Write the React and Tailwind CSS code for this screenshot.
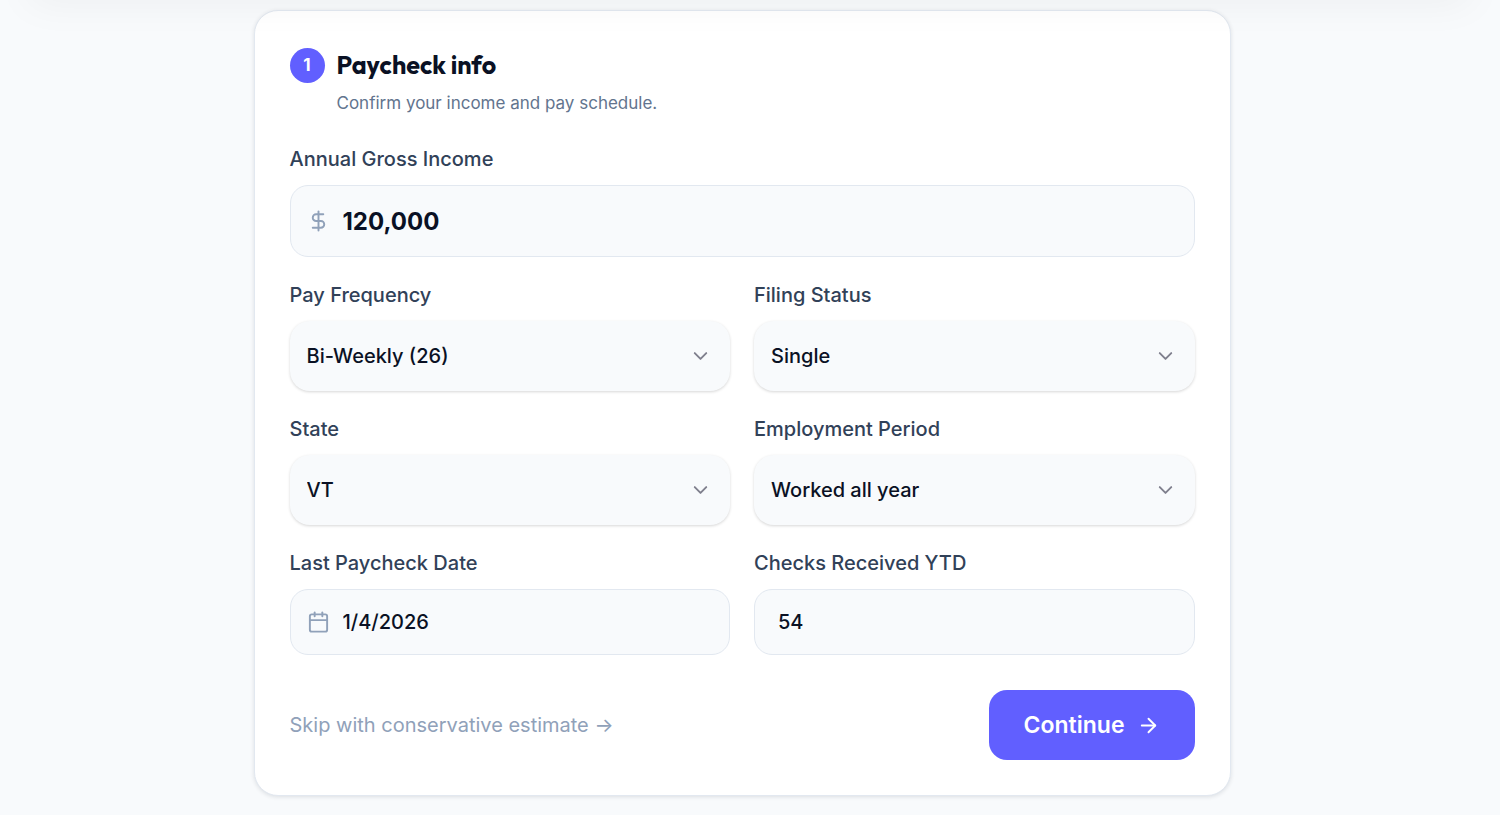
import { useState } from 'react'
import { ArrowRight, Calendar, ChevronDown, DollarSign } from 'lucide-react'

const labelClass = 'block text-[20px] leading-7 font-medium text-slate-700 mb-3'
const inputClass =
    'block w-full rounded-[18px] border border-slate-200 bg-slate-50 text-[#0a1124] outline-none focus:border-indigo-500'

function SelectField({ id, label, options }) {
    return (
        <div>
            <label htmlFor={id} className={labelClass}>{label}</label>
            <div className="relative">
                <select
                    id={id}
                    className="block w-full h-[70px] appearance-none rounded-[20px] bg-slate-50 pl-[17px] pr-14 text-[20px] font-medium text-[#0a1124] shadow-[0_1px_3px_rgba(0,0,0,0.16)] outline-none"
                >
                    {options.map((option) => (
                        <option key={option}>{option}</option>
                    ))}
                </select>
                <ChevronDown
                    size={23}
                    strokeWidth={2}
                    className="pointer-events-none absolute right-[18px] top-1/2 -translate-y-1/2 text-[#7f7f8d]"
                />
            </div>
        </div>
    )
}

export default function App() {
    const [income, setIncome] = useState('120,000')
    const [date, setDate] = useState('1/4/2026')
    const [checks, setChecks] = useState('54')

    return (
        <div className="relative min-h-screen overflow-hidden bg-slate-50 font-['Inter',sans-serif]">
            <div className="pointer-events-none absolute inset-x-0 bottom-full z-10 h-24 shadow-[0_32px_40px_-29px_rgba(0,0,0,0.05)]" />

            <main className="pt-[10px] pb-5 pl-4 pr-8">
                <form
                    onSubmit={(e) => e.preventDefault()}
                    className="mx-auto max-w-[977px] rounded-[24px] border border-slate-200 bg-white p-[35px] shadow-[0_1px_4px_rgba(15,23,42,0.12)]"
                >
                    {/* Step header */}
                    <div className="mb-[30px]">
                        <div className="flex items-center gap-3">
                            <span className="flex size-[35px] items-center justify-center rounded-full bg-[#615fff] text-[17px] font-bold text-white">
                                1
                            </span>
                            <h2 className="font-['Outfit','Lato',sans-serif] text-[25px] leading-[39px] font-bold text-[#0a1124]">
                                Paycheck info
                            </h2>
                        </div>
                        <p className="mt-[6px] pl-[47px] text-[17px] leading-6 text-slate-500">
                            Confirm your income and pay schedule.
                        </p>
                    </div>

                    <div className="flex flex-col gap-6">
                        <div>
                            <label htmlFor="income" className={labelClass}>Annual Gross Income</label>
                            <div className="relative">
                                <DollarSign
                                    size={23}
                                    className="pointer-events-none absolute left-[17px] top-1/2 -translate-y-1/2 text-slate-400"
                                />
                                <input
                                    id="income"
                                    value={income}
                                    onChange={(e) => setIncome(e.target.value)}
                                    className={`${inputClass} h-[72px] pl-[52px] pr-5 text-[24px] font-bold`}
                                />
                            </div>
                        </div>

                        <div className="grid grid-cols-2 gap-6">
                            <SelectField id="frequency" label="Pay Frequency" options={['Bi-Weekly (26)', 'Weekly (52)', 'Monthly (12)']} />
                            <SelectField id="status" label="Filing Status" options={['Single', 'Married', 'Head of Household']} />
                            <SelectField id="state" label="State" options={['VT', 'NY', 'CA']} />
                            <SelectField id="period" label="Employment Period" options={['Worked all year', 'Partial year']} />

                            <div>
                                <label htmlFor="date" className={labelClass}>Last Paycheck Date</label>
                                <div className="relative">
                                    <Calendar
                                        size={23}
                                        className="pointer-events-none absolute left-[17px] top-1/2 -translate-y-1/2 text-slate-400"
                                    />
                                    <input
                                        id="date"
                                        value={date}
                                        onChange={(e) => setDate(e.target.value)}
                                        className={`${inputClass} h-[66px] pl-[52px] pr-5 text-[20px] font-medium`}
                                    />
                                </div>
                            </div>
                            <div>
                                <label htmlFor="checks" className={labelClass}>Checks Received YTD</label>
                                <input
                                    id="checks"
                                    value={checks}
                                    onChange={(e) => setChecks(e.target.value)}
                                    className={`${inputClass} h-[66px] px-[23px] text-[20px] font-medium`}
                                />
                            </div>
                        </div>
                    </div>

                    {/* Actions */}
                    <div className="mt-[35px] flex items-center justify-between">
                        <button type="button" className="text-[20px] leading-7 text-slate-400 hover:text-slate-600">
                            Skip with conservative estimate →
                        </button>
                        <button
                            type="submit"
                            className="flex h-[70px] items-center gap-3 rounded-[18px] bg-[#615fff] px-[35px] text-[23px] font-semibold text-white hover:bg-indigo-600"
                        >
                            Continue
                            <ArrowRight size={23} />
                        </button>
                    </div>
                </form>
            </main>
        </div>
    )
}
